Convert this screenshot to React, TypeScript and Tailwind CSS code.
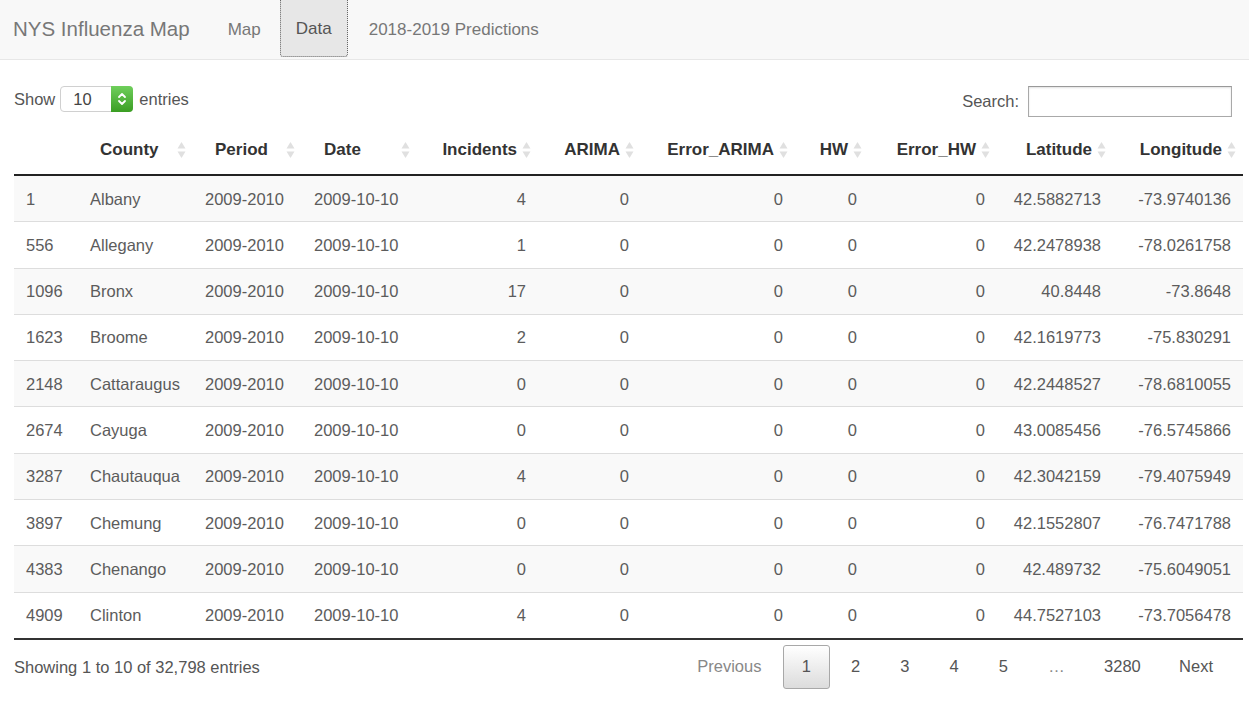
import React from "react";

const rows = [
  ["1", "Albany", "4", "42.5882713", "-73.9740136"],
  ["556", "Allegany", "1", "42.2478938", "-78.0261758"],
  ["1096", "Bronx", "17", "40.8448", "-73.8648"],
  ["1623", "Broome", "2", "42.1619773", "-75.830291"],
  ["2148", "Cattaraugus", "0", "42.2448527", "-78.6810055"],
  ["2674", "Cayuga", "0", "43.0085456", "-76.5745866"],
  ["3287", "Chautauqua", "4", "42.3042159", "-79.4075949"],
  ["3897", "Chemung", "0", "42.1552807", "-76.7471788"],
  ["4383", "Chenango", "0", "42.489732", "-75.6049051"],
  ["4909", "Clinton", "4", "44.7527103", "-73.7056478"],
];

const cols: { label: string; w: number; right: boolean }[] = [
  { label: "", w: 64, right: false },
  { label: "County", w: 115, right: false },
  { label: "Period", w: 109, right: false },
  { label: "Date", w: 115, right: false },
  { label: "Incidents", w: 121, right: true },
  { label: "ARIMA", w: 103, right: true },
  { label: "Error_ARIMA", w: 154, right: true },
  { label: "HW", w: 74, right: true },
  { label: "Error_HW", w: 128, right: true },
  { label: "Latitude", w: 116, right: true },
  { label: "Longitude", w: 130, right: true },
];

function SortIcon() {
  return (
    <svg
      width="9"
      height="17"
      viewBox="0 0 9 17"
      className="absolute right-[7px] top-1/2 -translate-y-1/2"
    >
      <polygon points="4.5,0.5 8.5,7 0.5,7" fill="#e0e0e0" />
      <polygon points="0.5,10 8.5,10 4.5,16.5" fill="#e0e0e0" />
    </svg>
  );
}

export default function App() {
  return (
    <div
      className="min-h-[715px] bg-white text-[#555]"
      style={{ fontFamily: '"Liberation Sans", Arial, sans-serif' }}
    >
      {/* Navbar */}
      <div className="flex h-[60px] items-stretch border-b border-[#e7e7e7] bg-[#f8f8f8]">
        <div className="flex items-center pl-[13px] pr-[22px] text-[20.5px] text-[#777]">
          NYS Influenza Map
        </div>
        <div className="flex items-center px-[16px] text-[17px] text-[#777]">Map</div>
        <div className="ml-[3px] mb-[2px] flex w-[68px] items-center justify-center rounded-b-[3px] border border-t-0 border-dotted border-[#666] bg-[#e7e7e7] pt-[2px] text-[17px] text-[#555]">
          Data
        </div>
        <div className="ml-[5px] flex items-center px-[16px] text-[17px] text-[#777]">
          2018-2019 Predictions
        </div>
      </div>

      <div className="pl-[14px] pr-[6px]">
        {/* Controls */}
        <div className="mt-[26px] flex items-start justify-between">
          <div className="flex h-[26px] items-center text-[16.5px] text-[#555]">
            <span>Show</span>
            <div className="ml-[5px] flex h-[26px] w-[73px] items-stretch rounded-[4px] border border-[#d0d0d0] bg-white">
              <span className="flex flex-1 items-center pl-[12px] text-[16.5px] text-[#444]">10</span>
              <span className="my-[-1px] mr-[-1px] flex w-[22px] items-center justify-center rounded-r-[4px] bg-gradient-to-b from-[#6fcf5b] to-[#3a9e22]">
                <svg width="10" height="16" viewBox="0 0 10 16">
                  <polyline points="2,6 5,3 8,6" fill="none" stroke="white" strokeWidth="1.8" strokeLinecap="round" strokeLinejoin="round" />
                  <polyline points="2,10 5,13 8,10" fill="none" stroke="white" strokeWidth="1.8" strokeLinecap="round" strokeLinejoin="round" />
                </svg>
              </span>
            </div>
            <span className="ml-[6px]">entries</span>
          </div>
          <div className="flex items-center pr-[11px] text-[16.5px] text-[#555]">
            <span>Search:</span>
            <div className="ml-[9px] h-[31px] w-[204px] border border-[#a9a9a9] border-t-[#999] bg-white shadow-[inset_0_1px_2px_rgba(0,0,0,0.12)]" />
          </div>
        </div>

        {/* Table */}
        <table className="mt-[9px] w-[1229px] table-fixed border-collapse">
          <colgroup>
            {cols.map((c, i) => (
              <col key={i} style={{ width: c.w }} />
            ))}
          </colgroup>
          <thead>
            <tr>
              {cols.map((c, i) => (
                <th
                  key={i}
                  className={
                    "relative border-b-2 border-[#222] py-[14px] text-[17px] font-bold leading-[20px] text-[#333] " +
                    (c.right ? "pl-[12px] pr-[21px] text-right" : "pl-[22px] pr-[21px] text-left")
                  }
                >
                  {c.label}
                  {c.label && <SortIcon />}
                </th>
              ))}
            </tr>
          </thead>
          <tbody>
            {rows.map((r, i) => {
              const vals = [r[0], r[1], "2009-2010", "2009-10-10", r[2], "0", "0", "0", "0", r[3], r[4]];
              return (
                <tr
                  key={i}
                  className={(i % 2 === 0 ? "bg-[#f9f9f9] " : "bg-white ") + (i > 0 ? "border-t border-[#dddddd]" : "")}
                >
                  {vals.map((v, j) => (
                    <td
                      key={j}
                      className={
                        "whitespace-nowrap px-[12px] py-[12.65px] text-[16.5px] leading-[20px] text-[#5c5c5c] " +
                        (cols[j].right ? "text-right" : "text-left")
                      }
                    >
                      {v}
                    </td>
                  ))}
                </tr>
              );
            })}
          </tbody>
        </table>
        <div className="w-[1229px] border-t-2 border-[#333]" />

        {/* Footer */}
        <div className="flex w-[1229px] items-start justify-between">
          <div className="pt-[16px] text-[16.5px] leading-[22px] text-[#555]">
            Showing 1 to 10 of 32,798 entries
          </div>
          <div className="flex items-center gap-[2.3px] pt-[5px] pr-[12px] text-[16.5px]">
            <span className="flex h-[44px] items-center px-[19px] text-[#888]">Previous</span>
            <span className="flex h-[44px] w-[47px] items-center justify-center rounded-[3px] border border-[#a8a8a8] bg-gradient-to-b from-white to-[#dcdcdc] text-[#555]">
              1
            </span>
            {["2", "3", "4", "5"].map((n) => (
              <span key={n} className="flex h-[44px] w-[47px] items-center justify-center text-[#555]">
                {n}
              </span>
            ))}
            <span className="flex h-[44px] items-center px-[19px] text-[#888]">…</span>
            <span className="flex h-[44px] items-center px-[18px] text-[#555]">3280</span>
            <span className="flex h-[44px] items-center px-[18px] text-[#555]">Next</span>
          </div>
        </div>
      </div>
    </div>
  );
}
